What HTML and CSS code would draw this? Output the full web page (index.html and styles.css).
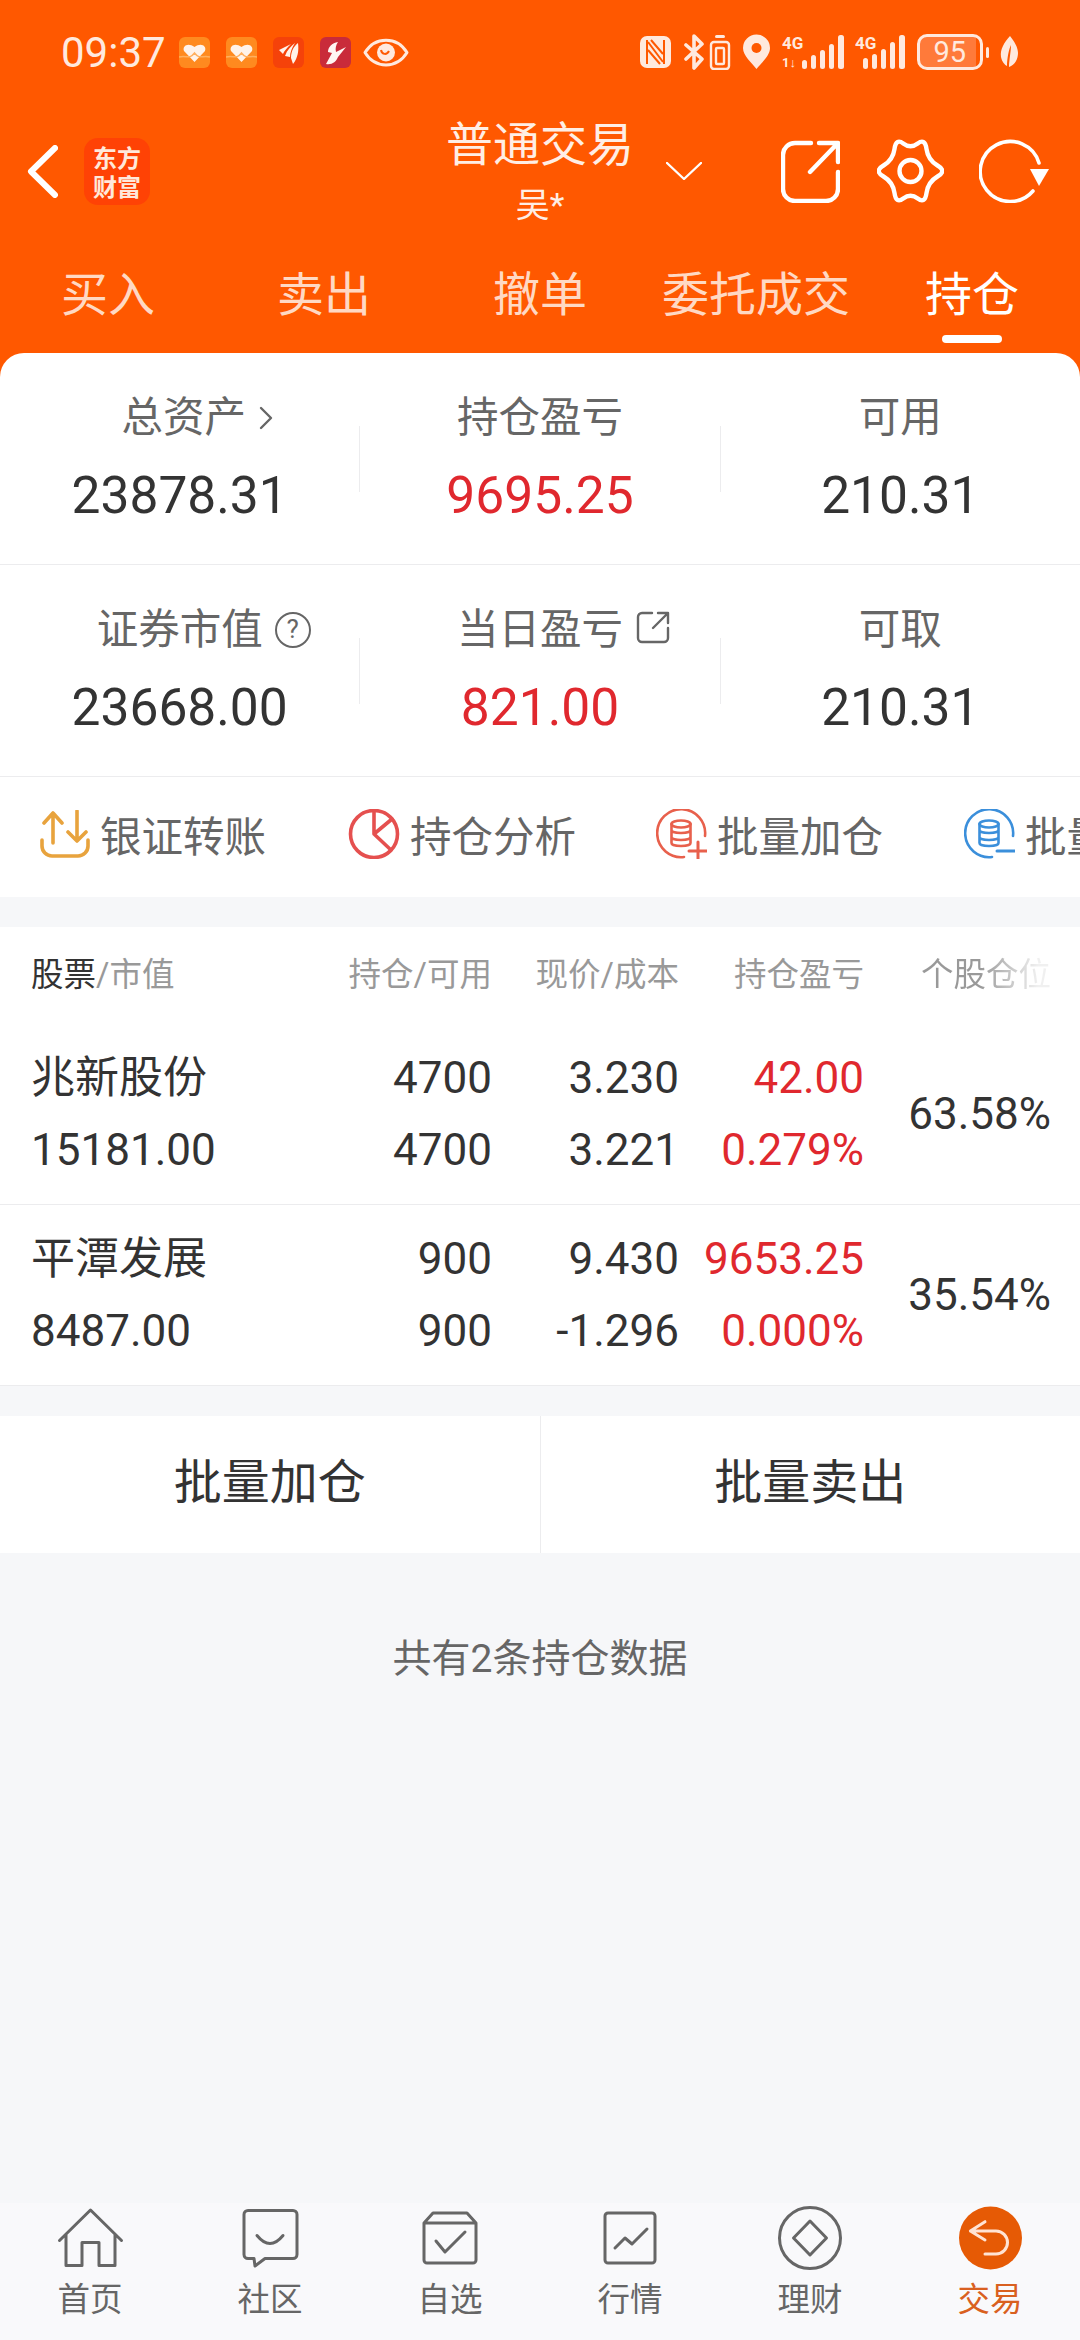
FILE: index.html
```html
<!DOCTYPE html>
<html lang="zh-CN">
<head>
<meta charset="utf-8">
<title>普通交易</title>
<link rel="stylesheet" href="styles.css">
</head>
<body>
<div class="app">
  <header class="head">
    <div class="status">
      <span class="time">09:37</span>
      <div class="notif">
        <svg width="31" height="31" viewBox="0 0 31 31"><rect width="31" height="31" rx="6" fill="#FF8A1F"/><path d="M15.5 25 L5 14 C3 9 9 5 15.5 10 C22 5 28 9 26 14Z" fill="#FFF3EA"/><path d="M0 20 C8 18 10 23 15.5 16 C21 23 23 18 31 20" class="hw"/></svg>
        <svg width="31" height="31" viewBox="0 0 31 31"><rect width="31" height="31" rx="6" fill="#FF8A1F"/><path d="M15.5 25 L5 14 C3 9 9 5 15.5 10 C22 5 28 9 26 14Z" fill="#FFF3EA"/><path d="M0 20 C8 18 10 23 15.5 16 C21 23 23 18 31 20" class="hw"/></svg>
        <svg width="31" height="31" viewBox="0 0 31 31"><rect width="31" height="31" rx="6" fill="#F5420A"/><path d="M6 13 L18 7 C14 11 11 14 10 17Z M12 19 C14 13 18 9 22 6 C19 11 17 15 17 20Z M18 21 C18 14 21 9 25 6 C26 13 25 21 20 27Z" fill="#FFF3EA"/></svg>
        <svg width="31" height="31" viewBox="0 0 31 31"><rect width="31" height="31" rx="6" fill="#C92B3A"/><path d="M18 5 C12 6 8 10 8 15 L12 16 L6 27 C12 28 16 25 18 20 L26 10 L16 15 C15 11 16 8 18 5Z" fill="#FFF6F2"/></svg>
        <svg width="46" height="31" viewBox="0 0 46 31"><path d="M2 15.5 C12 -1 34 -1 44 15.5 C34 32 12 32 2 15.5Z" class="ln s3"/><circle cx="23" cy="15.5" r="9" class="fl"/><path d="M18 13 C19 18 24 18 26 14" class="eye"/></svg>
      </div>
      <div class="sys">
        <svg width="31" height="32" viewBox="0 0 31 32"><rect x="0" y="0" width="31" height="32" rx="7" class="fl"/><path d="M7 4 V28 M24 4 V28 M8 6 L23 26 M8 14 L20 28 M11 4 L23 18" class="cut"/></svg>
        <svg width="48" height="36" viewBox="0 0 48 36"><path d="M3 11 L19 25 L11 34 V2 L19 10 L3 25" class="ln s3b"/><rect x="28" y="8" width="18" height="27" rx="3" class="ln s2"/><rect x="33" y="14" width="8" height="16" rx="1" class="ln s2"/><rect x="32" y="1" width="10" height="3" rx="1.5" class="fl"/></svg>
        <svg width="29" height="36" viewBox="0 0 29 36"><path d="M14.5 35 C10 29 1 22 1 14 A13.5 13.5 0 0 1 28 14 C28 22 19 29 14.5 35Z" class="fl"/><circle cx="14.5" cy="14" r="5" fill="#FF5800"/></svg>
        <svg width="62" height="36" viewBox="0 0 62 36"><text x="0" y="15" class="sg">4G</text><text x="0" y="33" class="sg sm">1↓</text><rect x="20" y="26" width="5" height="9" rx="2.5" class="fl"/><rect x="29" y="21" width="5" height="14" rx="2.5" class="fl"/><rect x="38" y="16" width="5" height="19" rx="2.5" class="fl"/><rect x="47" y="10" width="5" height="25" rx="2.5" class="fl"/><rect x="56" y="1" width="6" height="34" rx="2.5" class="fl"/></svg>
        <svg width="50" height="36" viewBox="0 0 50 36"><text x="0" y="15" class="sg">4G</text><rect x="8" y="24" width="5" height="11" rx="2.5" class="fl"/><rect x="17" y="20" width="5" height="15" rx="2.5" class="fl"/><rect x="26" y="15" width="5" height="20" rx="2.5" class="fl"/><rect x="35" y="8" width="5" height="27" rx="2.5" class="fl"/><rect x="44" y="1" width="6" height="34" rx="2.5" class="fl"/></svg>
        <div class="batt"><span class="batt-body">95</span><span class="batt-nub"></span></div>
        <svg width="18" height="34" viewBox="0 0 18 34"><path d="M10 1 C4 8 0 14 1 22 C2 27 5 30 7 31 C7 23 9 14 11 10 C11 16 9 26 9 32 C15 30 18 24 18 18 C18 12 14 6 10 1Z" class="fl"/></svg>
      </div>
    </div>
    <nav class="nav">
      <div class="nav-left">
        <svg width="31" height="53" viewBox="0 0 31 53"><path d="M28 3 L4 26.5 L28 50" class="ln s5"/></svg>
        <div class="logo"><span>东方</span><span>财富</span></div>
      </div>
      <div class="title"><div class="title-main">普通交易</div><div class="title-sub">吴*</div></div>
      <div class="nav-right">
        <svg class="drop" width="36" height="18" viewBox="0 0 36 18"><path d="M1 1 L18 17 L35 1" class="ln s2"/></svg>
        <svg class="act-share" width="59" height="63" viewBox="0 0 59 63"><path d="M30 3 H14 A12 12 0 0 0 2 15 V49 A12 12 0 0 0 14 61 H45 A12 12 0 0 0 57 49 V32" class="ln s4"/><path d="M29 32 L56 4 M38 3 H57 V22" class="ln s4"/></svg>
        <svg class="act-gear" width="67" height="64" viewBox="0 0 67 64"><path d="M60.5 26.5 Q51 21 49.5 10 Q48 -1 40.75 4.5 Q33.5 10 26.25 4.5 Q19 -1 17.5 10 Q16 21 6.5 26.5 Q-3 32 6.5 37.5 Q16 43 17.5 54 Q19 65 26.25 59.5 Q33.5 54 40.75 59.5 Q48 65 49.5 54 Q51 43 60.5 37.5 Q70 32 60.5 26.5Z" class="ln s4"/><circle cx="33.5" cy="32" r="11" class="ln s4"/></svg>
        <svg class="act-refresh" width="71" height="64" viewBox="0 0 71 64"><path d="M60 24 A30 30 0 1 0 54 52" class="ln s3b"/><polygon points="51,30 70,30 60,47" class="fl-w"/></svg>
      </div>
    </nav>
    <div class="tabs">
      <div class="tab">买入</div>
      <div class="tab">卖出</div>
      <div class="tab">撤单</div>
      <div class="tab">委托成交</div>
      <div class="tab active">持仓<i class="tab-line"></i></div>
    </div>
  </header>

  <section class="summary">
    <div class="stats">
      <div class="stat"><div class="label shift"><span class="lab-wrap">总资产<svg class="lab-icon chev" width="14" height="24" viewBox="0 0 14 24"><path d="M2 2 L12 12 L2 22" class="ln s2"/></svg></span></div><div class="value">23878.31</div></div>
      <i class="vline"></i>
      <div class="stat"><div class="label">持仓盈亏</div><div class="value red">9695.25</div></div>
      <i class="vline"></i>
      <div class="stat"><div class="label">可用</div><div class="value">210.31</div></div>
    </div>
    <div class="stats">
      <div class="stat"><div class="label"><span class="lab-wrap">证券市值<span class="lab-icon help">?</span></span></div><div class="value">23668.00</div></div>
      <i class="vline"></i>
      <div class="stat"><div class="label"><span class="lab-wrap">当日盈亏<svg class="lab-icon ext" width="34" height="33" viewBox="0 0 34 33"><path d="M16 2 H6 A4 4 0 0 0 2 6 V27 A4 4 0 0 0 6 31 H28 A4 4 0 0 0 32 27 V17" class="ln s2"/><path d="M17 17 L32 2 M22 2 H32 V12" class="ln s2"/></svg></span></div><div class="value red">821.00</div></div>
      <i class="vline"></i>
      <div class="stat"><div class="label">可取</div><div class="value">210.31</div></div>
    </div>
    <div class="actions">
      <div class="action">
        <svg class="c-amber" width="50" height="48" viewBox="0 0 50 48"><path d="M13 33 V3 M4 13 L13 3 L22 13 M37 1 V31 M28 22 L37 31 L46 22 M2 30 V36 A10 10 0 0 0 12 46 H38 A10 10 0 0 0 48 36 V30" class="ln s3b"/></svg>
        <span>银证转账</span>
      </div>
      <div class="action">
        <svg class="c-red" width="52" height="50" viewBox="0 0 52 50"><circle cx="26" cy="25" r="23.5" class="ln s3b"/><path d="M26 2 V25 L44 10 M26 25 L43 41" class="ln s3b"/></svg>
        <span>持仓分析</span>
      </div>
      <div class="action">
        <svg class="c-coral" width="51" height="50" viewBox="0 0 51 50"><path d="M49 27 A24 24 0 1 0 28 48" class="ln s2b"/><ellipse cx="25" cy="15" rx="9.5" ry="3.5" class="ln s2b"/><path d="M15.500 15 V34 C15.500 38 34.500 38 34.500 34 V15 M15.500 21 C15.500 25 34.500 25 34.500 21 M15.500 28 C15.500 32 34.500 32 34.500 28" class="ln s2b"/><path d="M33 42 H51 M42 33 V50" class="ln s3"/></svg>
        <span>批量加仓</span>
      </div>
      <div class="action">
        <svg class="c-blue" width="51" height="50" viewBox="0 0 51 50"><path d="M49 27 A24 24 0 1 0 28 48" class="ln s2b"/><ellipse cx="25" cy="15" rx="9.5" ry="3.500" class="ln s2b"/><path d="M15.500 15 V34 C15.500 38 34.500 38 34.500 34 V15 M15.500 21 C15.500 25 34.500 25 34.500 21 M15.500 28 C15.500 32 34.500 32 34.500 28" class="ln s2b"/><path d="M33 42 H51" class="ln s3"/></svg>
        <span>批量卖出</span>
      </div>
    </div>
  </section>

  <section class="table">
    <div class="thead">
      <div class="th-first"><b>股票</b>/市值</div>
      <div>持仓/可用</div>
      <div>现价/成本</div>
      <div>持仓盈亏</div>
      <div class="fade">个股仓位</div>
    </div>
    <div class="trow">
      <div class="cell left"><div>兆新股份</div><div>15181.00</div></div>
      <div class="cell"><div>4700</div><div>4700</div></div>
      <div class="cell"><div>3.230</div><div>3.221</div></div>
      <div class="cell red"><div>42.00</div><div>0.279%</div></div>
      <div class="cell"><div>63.58%</div></div>
    </div>
    <div class="trow">
      <div class="cell left"><div>平潭发展</div><div>8487.00</div></div>
      <div class="cell"><div>900</div><div>900</div></div>
      <div class="cell"><div>9.430</div><div>-1.296</div></div>
      <div class="cell red"><div>9653.25</div><div>0.000%</div></div>
      <div class="cell"><div>35.54%</div></div>
    </div>
  </section>

  <div class="batch">
    <div class="batch-btn">批量加仓</div>
    <div class="batch-btn">批量卖出</div>
  </div>

  <div class="count">共有2条持仓数据</div>

  <footer class="tabbar">
    <div class="bt"><svg width="65" height="59" viewBox="0 0 65 59"><path d="M1.500 32 L32.500 1.500 L63.500 32 M8 26 V57 H24 V34 H41 V57 H57 V26" class="ln s3"/></svg><span>首页</span></div>
    <div class="bt"><svg width="57" height="59" viewBox="0 0 57 59"><path d="M6 2 H51 A4 4 0 0 1 55 6 V46 A4 4 0 0 1 51 50 H23 L13 57.500 L12 50 H6 A4 4 0 0 1 2 46 V6 A4 4 0 0 1 6 2Z" class="ln s3"/><path d="M15 27 Q28 43 41 27" class="ln s3"/></svg><span>社区</span></div>
    <div class="bt"><svg width="56" height="54" viewBox="0 0 56 54"><path d="M2 12 H54 V49 A3 3 0 0 1 51 52 H5 A3 3 0 0 1 2 49Z M2 12 L11 2 H45 L54 12" class="ln s3"/><path d="M14 30 L23 41 L43 21" class="ln s3"/></svg><span>自选</span></div>
    <div class="bt"><svg width="54" height="54" viewBox="0 0 54 54"><rect x="2" y="2" width="50" height="50" rx="3" class="ln s3"/><path d="M12 37 L22 27 L29 33 L44 18" class="ln s3"/></svg><span>行情</span></div>
    <div class="bt"><svg width="64" height="64" viewBox="0 0 64 64"><circle cx="32" cy="32" r="30.500" class="ln s3"/><path d="M32 15 L48.500 32 L32 49 L15.500 32Z" class="ln s3"/></svg><span>理财</span></div>
    <div class="bt on"><svg width="63" height="64" viewBox="0 0 63 64"><circle cx="31.500" cy="32" r="31.500" class="fl-o"/><path d="M26 15.700 L11.400 25 L26 34 M11.400 25 H37 A11.500 11.500 0 0 1 37 48 H26" class="arrow"/></svg><span>交易</span></div>
  </footer>
</div>
</body>
</html>
```

FILE: styles.css
```css
* { box-sizing: border-box; }
html, body { margin: 0; padding: 0; }
body {
  width: 1080px;
  height: 2340px;
  overflow: hidden;
  font-family: Roboto, "Noto Sans CJK SC", sans-serif;
  color: #333;
}
.app {
  width: 1080px;
  height: 2340px;
  display: flex;
  flex-direction: column;
  background: linear-gradient(#ff5800 0 400px, #f6f7f9 400px);
}

/* svg helpers */
.ln { fill: none; stroke: currentColor; stroke-linecap: round; stroke-linejoin: round; }
.s2 { stroke-width: 2.4; }
.s2b { stroke-width: 2.6; }
.s3 { stroke-width: 3; }
.s3b { stroke-width: 3.6; }
.s4 { stroke-width: 4.4; }
.s5 { stroke-width: 6; }
.fl { fill: #ffe9de; }
.fl-w { fill: #fff; }
.fl-o { fill: #e65a05; }
.hw { fill: none; stroke: #ffb060; stroke-width: 1.5; }
.eye { fill: none; stroke: #ff5800; stroke-width: 2; }
.cut { fill: none; stroke: #ff5800; stroke-width: 2; }
.arrow { fill: none; stroke: #ffe3d3; stroke-width: 3; stroke-linecap: round; stroke-linejoin: round; }
.sg { font: 700 17px Roboto, sans-serif; fill: #ffe9de; }
.sg.sm { font-size: 13px; }

/* header */
.head { background: #ff5800; color: #fff; height: 353px; flex: none; }
.status {
  height: 104px;
  padding: 0 62px 0 61px;
  display: flex;
  align-items: center;
  color: #ffe9de;
}
.time { font-size: 42px; width: 118px; flex: none; }
.notif { display: flex; align-items: center; gap: 16px; }
.notif svg:last-child { margin-left: -4px; }
.sys { margin-left: auto; display: flex; align-items: center; gap: 11.3px; }
.batt { display: flex; align-items: center; gap: 3px; }
.batt-body {
  width: 66px;
  height: 36px;
  border: 3px solid #ffe9de;
  border-radius: 10px;
  background: linear-gradient(90deg, #ff7a3a 0 93%, transparent 93%);
  font-size: 29px;
  line-height: 30px;
  text-align: center;
}
.batt-nub { width: 3px; height: 11px; background: #ffe9de; border-radius: 2px; }

.nav {
  height: 134px;
  display: grid;
  grid-template-columns: 1fr 188px 1fr;
  align-items: center;
}
.nav-left { display: flex; align-items: center; gap: 26px; padding-left: 27px; }
.logo {
  width: 66px;
  height: 67px;
  border-radius: 14px;
  background: #ff4205;
  color: #ffe8da;
  display: flex;
  flex-direction: column;
  align-items: center;
  justify-content: center;
  font: 700 24px/29px "Noto Sans CJK SC", sans-serif;
}
.title { text-align: center; color: #ffeee5; }
.title-main { font-size: 47px; line-height: 56px; }
.title-sub { font-size: 34px; line-height: 40px; margin-top: 12px; }
.nav-right { display: flex; align-items: center; }
.drop { margin-left: 32px; }
.act-share { margin-left: 79px; }
.act-gear { margin-left: 37px; }
.act-refresh { margin-left: 35px; }

.tabs { display: grid; grid-template-columns: repeat(5, 216px); height: 115px; }
.tab {
  padding-top: 34px;
  font-size: 47px;
  line-height: 46px;
  text-align: center;
  color: #ffd9c4;
}
.tab.active { color: #fff; }
.tab-line { display: block; width: 60px; height: 8px; border-radius: 4px; background: #fff; margin: 17px auto 0; }

/* summary */
.summary { background: #fff; border-radius: 24px 24px 0 0; flex: none; }
.stats {
  height: 212px;
  display: flex;
  align-items: center;
  border-bottom: 1px solid #ececee;
}
.stat { flex: 1; text-align: center; padding-top: 7px; }
.label { font-size: 41.5px; line-height: 40px; color: #666; }
.label.shift { padding-left: 8px; }
.lab-wrap { position: relative; display: inline-block; }
.lab-icon { position: absolute; top: 50%; color: #666; }
.chev { left: calc(100% + 13px); margin-top: -12px; }
.ext { left: calc(100% + 13px); margin-top: -19px; }
.help {
  left: calc(100% + 12px);
  margin-top: -18px;
  width: 36px;
  height: 36px;
  border: 2.5px solid #666;
  border-radius: 50%;
  font-size: 26px;
  line-height: 31px;
  text-align: center;
}
.value { font-size: 51.5px; line-height: 60px; margin-top: 28px; color: #333; }
.red { color: #e0282e !important; }
.vline { width: 1px; height: 66px; background: #ececee; flex: none; }
.actions { height: 120px; padding: 0 0 6px 40px; display: flex; align-items: center; overflow: hidden; }
.action { flex: none; width: 308px; display: flex; align-items: center; gap: 10px; font-size: 41.5px; color: #666; }
.action svg { flex: none; }
.c-amber { color: #e8a33d; }
.c-red { color: #e5504f; }
.c-coral { color: #e8604c; }
.c-blue { color: #3b8fdb; }

/* table */
.table { margin-top: 30px; background: #fff; border-bottom: 1px solid #ececee; flex: none; }
.thead, .trow {
  display: grid;
  grid-template-columns: 1fr 150px 187px 185px 187px;
  padding: 0 29px 0 31px;
  align-items: center;
  text-align: right;
}
.thead { height: 97px; padding-bottom: 9px; font-size: 32.5px; color: #999; }
.th-first { text-align: left; }
.th-first b { font-weight: 400; color: #333; }
.fade {
  background: linear-gradient(90deg, #999 45%, #f0f0f0 90%);
  -webkit-background-clip: text;
  background-clip: text;
  color: transparent;
  justify-self: end;
}
.trow { height: 180px; font-size: 44px; line-height: 72px; color: #333; }
.trow + .trow { border-top: 1px solid #ececee; box-sizing: content-box; }
.cell.left { text-align: left; }

/* batch */
.batch { margin-top: 30px; height: 137px; background: #fff; display: flex; align-items: center; flex: none; }
.batch-btn { flex: 1; height: 100%; padding-bottom: 14px; display: flex; align-items: center; justify-content: center; font-size: 48px; color: #333; }
.batch-btn + .batch-btn { border-left: 1px solid #ececee; }

.count { margin-top: 81px; line-height: 50px; font-size: 39px; text-align: center; color: #666; }

/* bottom */
.tabbar {
  margin-top: auto;
  height: 137px;
  display: grid;
  grid-template-columns: repeat(6, 180px);
  background: #f9f9fb;
  color: #666;
}
.bt { display: flex; flex-direction: column; align-items: center; }
.bt svg { height: 70px; padding: 3px 0; flex: none; overflow: visible; }
.bt span { font-size: 32.5px; line-height: 40px; margin-top: 7px; }
.bt.on { color: #d96020; }
```
